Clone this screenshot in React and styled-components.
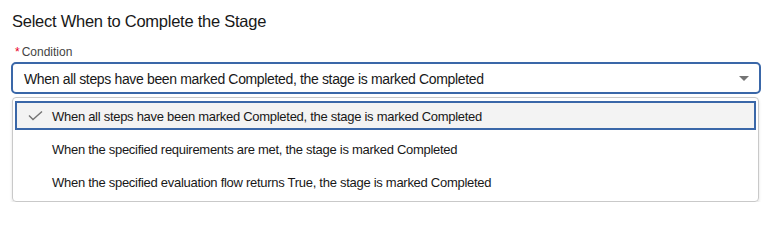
import styled, { createGlobalStyle } from "styled-components";

const GlobalStyle = createGlobalStyle`
  body {
    margin: 0;
    background: #ffffff;
    font-family: "Liberation Sans", Arial, sans-serif;
    color: #181818;
  }
`;

const Page = styled.div`
  padding: 11px 7px 0 11px;
  width: 750px;
`;

const Title = styled.h2`
  margin: 0 0 0 1px;
  font-size: 16.5px;
  letter-spacing: -0.25px;
  line-height: 20px;
  font-weight: 400;
  color: #181818;
`;

const Label = styled.div`
  margin: 13px 0 2px 4px;
  font-size: 12px;
  line-height: 16px;
  color: #444444;
`;

const Required = styled.abbr`
  color: #ea001e;
  text-decoration: none;
  margin-right: 2px;
`;

const Select = styled.div`
  box-sizing: border-box;
  height: 32px;
  border: 2px solid #3a67a8;
  border-radius: 5px;
  display: flex;
  align-items: center;
  justify-content: space-between;
  padding: 1px 10px 0 11px;
  font-size: 14px;
  letter-spacing: -0.35px;
  color: #181818;
`;

const Caret = styled.span`
  width: 0;
  height: 0;
  border-left: 5px solid transparent;
  border-right: 5px solid transparent;
  border-top: 5px solid #747474;
`;

const Listbox = styled.div`
  box-sizing: border-box;
  margin: 3px 2px 0 1px;
  border: 1px solid #c9c9c9;
  border-radius: 4px;
  box-shadow: 0 2px 3px rgba(0, 0, 0, 0.12);
  padding: 1px 0 3px;
  display: flex;
  flex-direction: column;
`;

const Option = styled.div`
  box-sizing: border-box;
  height: 29px;
  margin: 2px 2px;
  padding: 1px 0 0 10px;
  display: flex;
  align-items: center;
  gap: 9px;
  font-size: 13px;
  letter-spacing: -0.28px;
  color: #181818;
  border: 2px solid ${(p) => (p.selected ? "#3a67a8" : "transparent")};
  background: ${(p) => (p.selected ? "#f3f3f3" : "transparent")};
`;

const CheckSlot = styled.span`
  width: 16px;
  height: 16px;
  display: flex;
`;

const Check = () => (
  <svg width="16" height="16" viewBox="0 0 16 16">
    <path d="M2 7.5 L6 11.5 L15 3.5" fill="none" stroke="#747474" strokeWidth="1.4" />
  </svg>
);

const options = [
  "When all steps have been marked Completed, the stage is marked Completed",
  "When the specified requirements are met, the stage is marked Completed",
  "When the specified evaluation flow returns True, the stage is marked Completed",
];

export default function App() {
  return (
    <>
      <GlobalStyle />
      <Page>
        <Title>Select When to Complete the Stage</Title>
        <Label>
          <Required title="required">*</Required>Condition
        </Label>
        <Select>
          <span>{options[0]}</span>
          <Caret />
        </Select>
        <Listbox>
          {options.map((text, i) => (
            <Option key={text} selected={i === 0}>
              <CheckSlot>{i === 0 && <Check />}</CheckSlot>
              <span>{text}</span>
            </Option>
          ))}
        </Listbox>
      </Page>
    </>
  );
}
